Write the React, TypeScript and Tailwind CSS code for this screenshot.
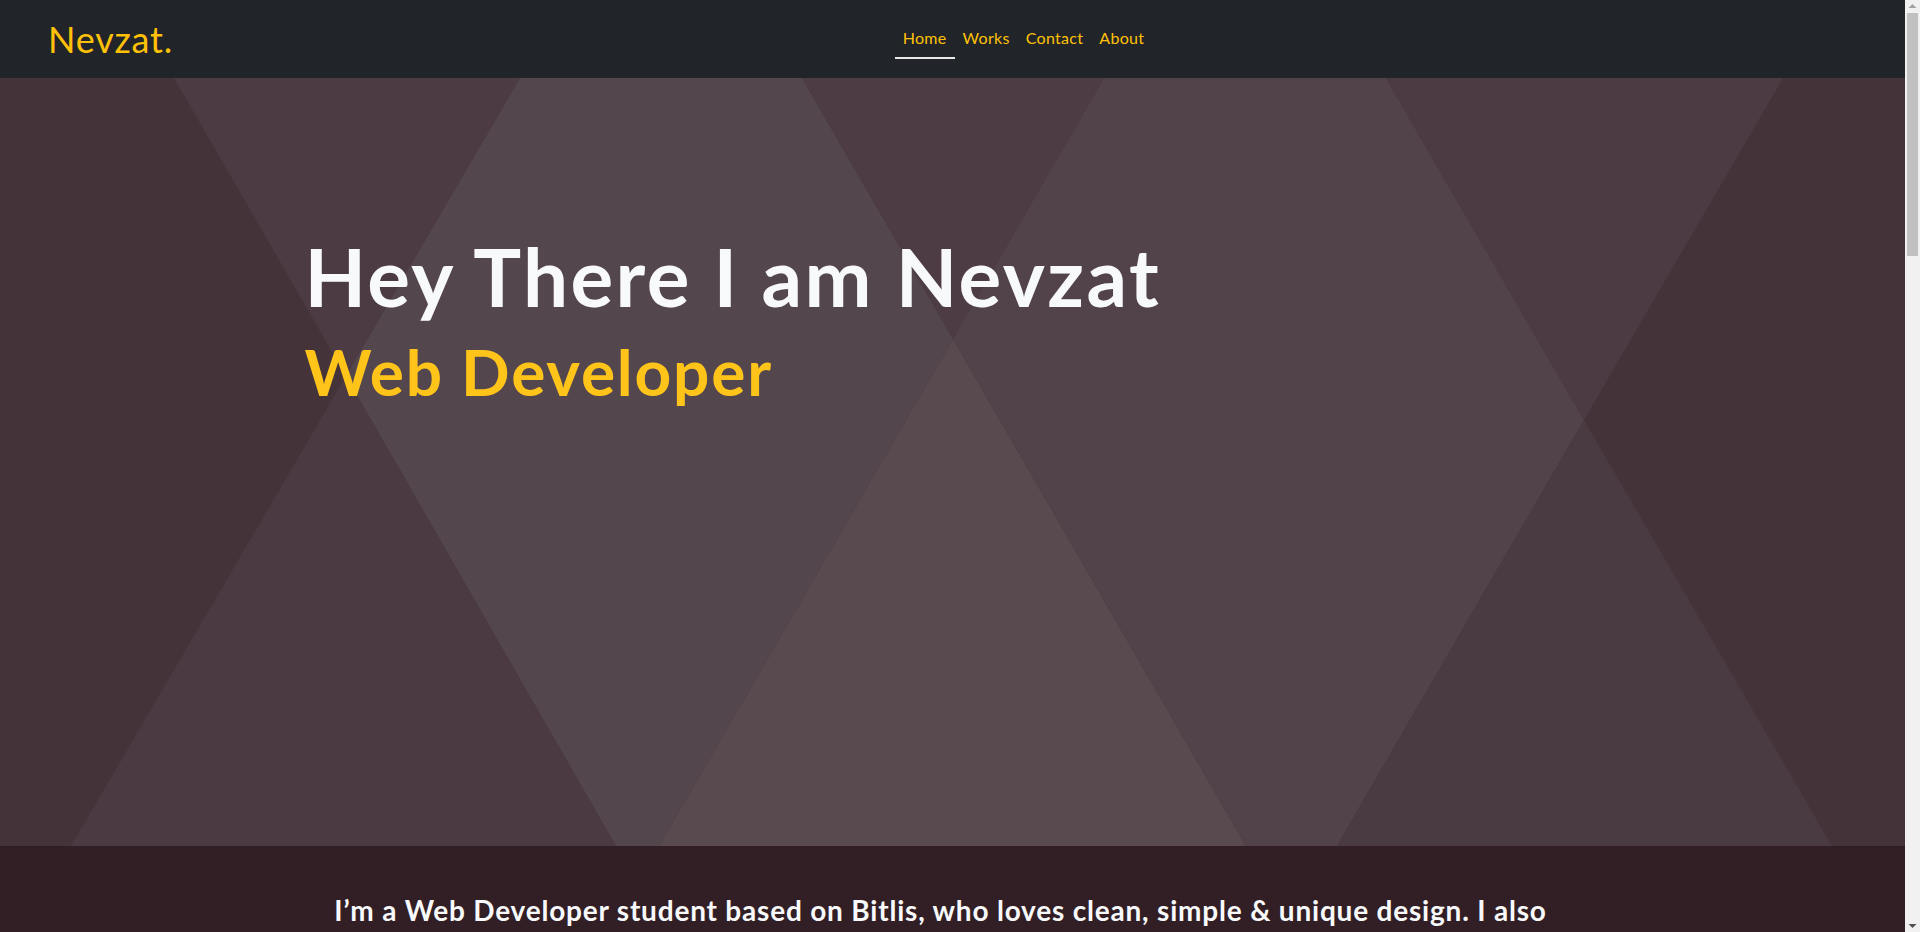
import React from "react";

const polys: { pts: string; fill: string }[] = [
  { pts: "174,0 520,0 346,298", fill: "#4c3b42" },
  { pts: "346,298 616,768 71,768", fill: "#4b3a41" },
  { pts: "520,0 802,0 953,261 659,768 616,768 346,298", fill: "#54464d" },
  { pts: "802,0 1104,0 953,261", fill: "#4d3c43" },
  { pts: "953,261 1246,768 659,768", fill: "#584a4f" },
  { pts: "1104,0 1386,0 1584,342 1337,768 1246,768 953,261", fill: "#524249" },
  { pts: "1386,0 1783,0 1584,342", fill: "#4c3b42" },
  { pts: "1584,342 1832,768 1337,768", fill: "#4a3a41" },
];

function HeroBackground() {
  return (
    <svg
      className="absolute inset-0 h-full w-full"
      viewBox="0 0 1905 768"
      preserveAspectRatio="none"
      aria-hidden="true"
    >
      <rect x="0" y="0" width="1905" height="768" fill="#44343a" />
      {polys.map((p, i) => (
        <polygon key={i} points={p.pts} fill={p.fill} />
      ))}
    </svg>
  );
}

function ScrollBar() {
  return (
    <div className="flex w-[15px] shrink-0 flex-col items-center bg-[#f1f1f1]">
      <svg width="15" height="13" viewBox="0 0 15 13" aria-hidden="true">
        <polygon points="3.5,8 7.5,4 11.5,8" fill="#a3a3a3" />
      </svg>
      <div className="h-[243px] w-[11px] bg-[#c1c1c1]" />
      <div className="flex-1" />
      <svg width="15" height="13" viewBox="0 0 15 13" aria-hidden="true">
        <polygon points="3.5,5 11.5,5 7.5,9" fill="#505050" />
      </svg>
    </div>
  );
}

export default function App() {
  const links = ["Home", "Works", "Contact", "About"];
  return (
    <div className="flex h-screen overflow-hidden bg-[#311f25] font-['Lato',sans-serif]">
      <div className="min-w-0 flex-1 overflow-hidden">
        <nav className="flex h-[78px] items-center bg-[#212529] pl-[48px] pr-[31px]">
          <a href="#" className="text-[36px] leading-none tracking-[0.8px] text-[#ffc107]">
            Nevzat.
          </a>
          <ul className="mx-auto flex items-center">
            {links.map((l, i) => (
              <li key={l}>
                <a
                  href="#"
                  className={
                    i === 0
                      ? "block border-b-[2px] border-[#e9e9e9] px-2 pt-[6px] pb-[7px] text-[16px] tracking-[0.3px] text-[#ffc107]"
                      : "block border-b-[2px] border-transparent px-2 pt-[6px] pb-[7px] text-[16px] tracking-[0.3px] text-[#ffc107]"
                  }
                >
                  {l}
                </a>
              </li>
            ))}
          </ul>
        </nav>

        <section className="relative h-[768px] overflow-hidden bg-[#44343a]">
          <HeroBackground />
          <div className="relative mx-auto max-w-[1320px] px-3 pt-[150px]">
            <h1 className="text-[80px] font-bold leading-[1.2] tracking-[2.4px] text-[#f8f9fa]">
              Hey There I am Nevzat
            </h1>
            <h2 className="mt-[10px] text-[64px] font-bold leading-[1.2] tracking-[1.8px] text-[#ffc41a]">
              Web Developer
            </h2>
          </div>
        </section>

        <section className="min-h-[2600px] bg-[#311f25] pt-[43px] pb-12">
          <div className="mx-auto max-w-[1320px] pl-3 pr-[36px] text-center">
            <p className="text-[28px] font-bold leading-[1.5] tracking-[0.8px] text-[#f8f9fa]">
              I’m a Web Developer student based on Bitlis, who loves clean, simple &amp; unique design. I also
              <br />
              enjoy learning new technologies and building fast, responsive websites.
            </p>
          </div>
        </section>
      </div>
      <ScrollBar />
    </div>
  );
}
